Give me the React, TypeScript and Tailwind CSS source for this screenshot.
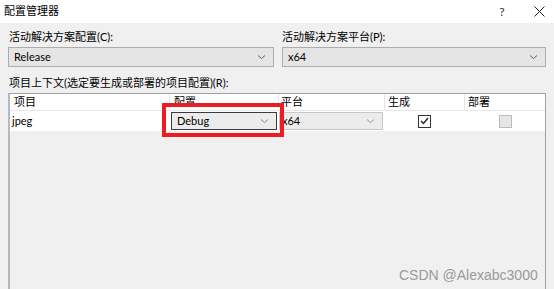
import React from 'react';

const font = { fontFamily: '"Segoe UI", Lato, "Noto Sans CJK SC", sans-serif' };

const Chevron: React.FC<{ color?: string }> = ({ color = '#606060' }) => (
  <svg width="9" height="6" viewBox="0 0 9 6" fill="none">
    <path d="M1 1.5 L4.5 4.5 L8 1.5" stroke={color} strokeWidth="1" />
  </svg>
);

const Select: React.FC<{ value: string }> = ({ value }) => (
  <div className="h-[20px] flex items-center justify-between pl-[5px] pr-[7px] bg-[#e5e5e5] border border-[#acacac] text-[11px] text-black">
    <span>{value}</span>
    <Chevron />
  </div>
);

const Checkbox: React.FC<{ checked?: boolean; disabled?: boolean }> = ({ checked, disabled }) => (
  <div
    className={
      disabled
        ? 'w-[13px] h-[13px] border border-[#bcbcbc] bg-[#e6e6e6]'
        : 'w-[13px] h-[13px] border border-[#333333] bg-white flex items-center justify-center'
    }
  >
    {checked && (
      <svg width="9" height="8" viewBox="0 0 9 8" fill="none">
        <path d="M1 4 L3.5 6.5 L8 1" stroke="#222" strokeWidth="1.4" />
      </svg>
    )}
  </div>
);

export default function App() {
  return (
    <div className="w-[554px] h-[289px] bg-[#f0f0f0] flex flex-col overflow-hidden relative text-black" style={font}>
      {/* 标题栏 */}
      <div className="h-[23px] bg-white flex items-center justify-between pl-[4px] shrink-0">
        <span className="text-[11px]">配置管理器</span>
        <div className="flex items-center h-full">
          <span className="w-[44px] text-center text-[12px] text-[#333]">?</span>
          <span className="w-[30px] flex justify-center">
            <svg width="11" height="11" viewBox="0 0 11 11">
              <path d="M0.5 0.5 L10.5 10.5 M10.5 0.5 L0.5 10.5" stroke="#222" strokeWidth="1" />
            </svg>
          </span>
        </div>
      </div>

      <div className="flex-1 flex flex-col pl-[8px] pr-[8px] pt-[6px]">
        <div className="grid grid-cols-[266px_264px] gap-x-[8px]">
          <div className="flex flex-col gap-[2px]">
            <span className="text-[11px] leading-[16px] pl-[1px]">活动解决方案配置(C):</span>
            <Select value="Release" />
          </div>
          <div className="flex flex-col gap-[2px]">
            <span className="text-[11px] leading-[16px]">活动解决方案平台(P):</span>
            <Select value="x64" />
          </div>
        </div>

        <span className="text-[11px] leading-[16px] mt-[8px] pl-[1px]">项目上下文(选定要生成或部署的项目配置)(R):</span>

        {/* 项目表格 */}
        <div className="relative mt-[2px] w-[538px] flex-1 border border-[#a0a0a0] border-l-2 border-l-[#b8b8c0] border-b-0 bg-[#f0f0f0] text-[11px]">
          <div className="grid grid-cols-[160px_109px_106px_80px_1fr] bg-white h-[17px] border-b border-[#e8e8e8]">
            <div className="pl-[4px] leading-[16px] border-r border-[#e5e5e5]">项目</div>
            <div className="pl-[4px] leading-[16px] border-r border-[#e5e5e5]">配置</div>
            <div className="pl-[2px] leading-[16px] border-r border-[#e5e5e5]">平台</div>
            <div className="pl-[3px] leading-[16px] border-r border-[#e5e5e5]">生成</div>
            <div className="pl-[3px] leading-[16px]">部署</div>
          </div>
          <div className="grid grid-cols-[160px_109px_106px_80px_1fr] bg-white h-[20px] items-center">
            <div className="pl-[2px]">jpeg</div>
            <div className="pl-[1px] pr-[2px]">
              <div className="h-[18px] flex items-center justify-between pl-[5px] pr-[7px] border border-[#3c3c3c] bg-[#ececec]">
                <span>Debug</span>
                <Chevron color="#888" />
              </div>
            </div>
            <div className="pr-[2px]">
              <div className="h-[18px] flex items-center justify-between pl-[2px] pr-[7px] border border-[#c8c8c8] bg-[#ececec]">
                <span>x64</span>
                <Chevron color="#999" />
              </div>
            </div>
            <div className="flex justify-center pr-[1px]">
              <Checkbox checked />
            </div>
            <div className="flex justify-center">
              <Checkbox disabled />
            </div>
          </div>

          {/* 红框标注 */}
          <div className="absolute left-[152px] top-[9px] w-[122px] h-[34px] border-4 border-[#ec1c24]" />
        </div>
      </div>

      <span
        className="absolute left-[399px] top-[265px] text-[14px] text-[#9a9a9a]"
        style={{ fontFamily: '"Liberation Sans", Arial, sans-serif' }}
      >
        CSDN @Alexabc3000
      </span>
    </div>
  );
}
